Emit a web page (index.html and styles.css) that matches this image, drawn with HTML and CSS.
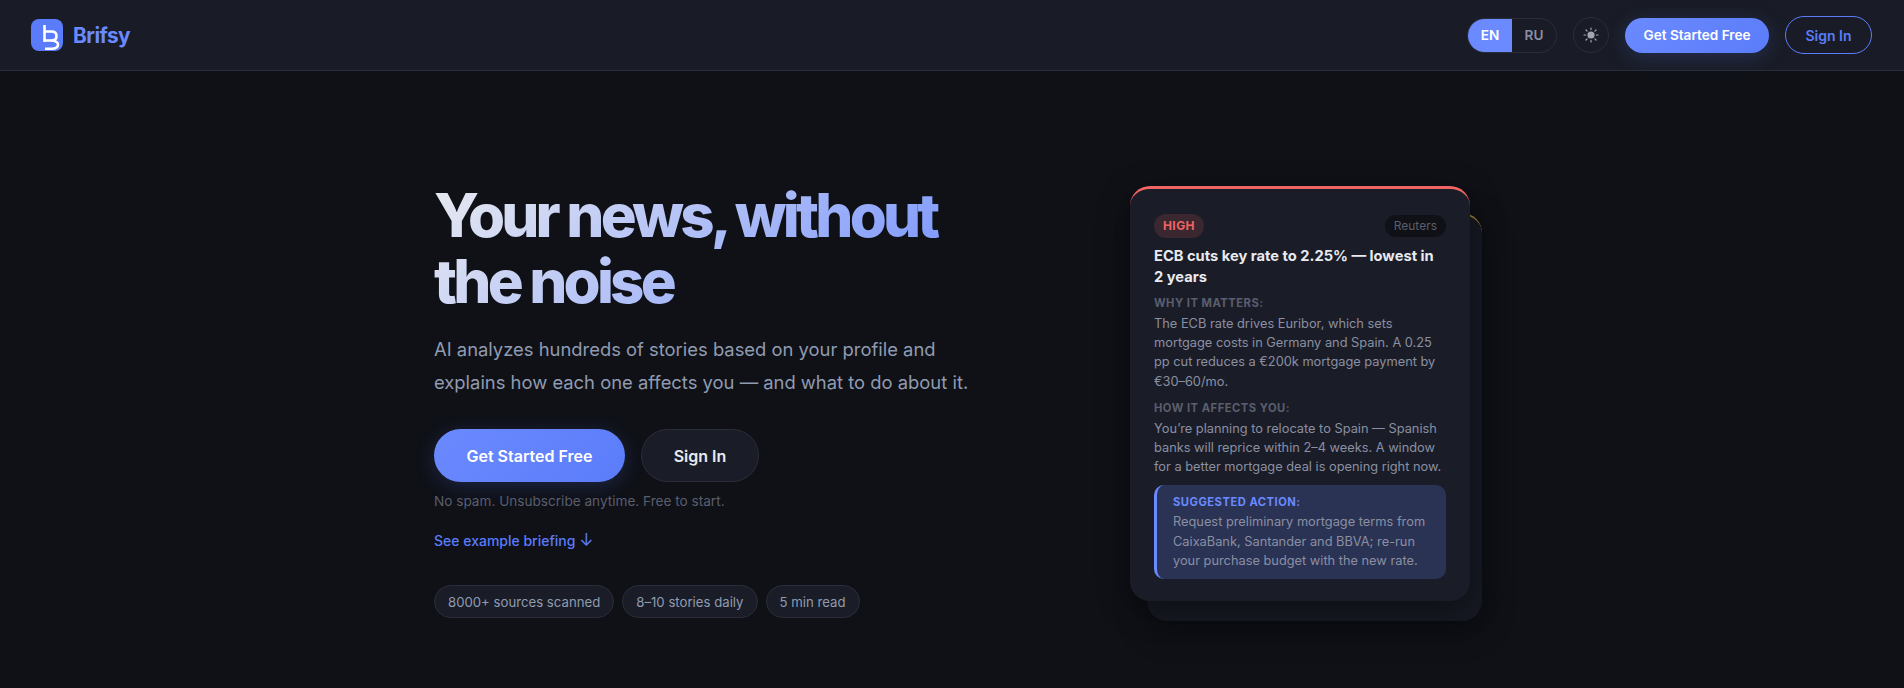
FILE: index.html
```html
<!DOCTYPE html>
<html lang="en">
<head>
    <meta charset="UTF-8">
    <meta name="viewport" content="width=device-width, initial-scale=1.0">
    <title>Brifsy</title>
    <link rel="stylesheet" href="styles.css">
</head>
<body>
    <header class="nav">
        <a class="logo" href="#">
            <svg class="logo-icon" width="32" height="32" viewBox="0 0 32 32">
                <rect width="32" height="32" rx="8" fill="#5b7cfa"/>
                <g fill="none" stroke="#fff" stroke-width="2.600">
                    <path d="M13.500 6V23"/>
                    <path d="M13.500 12.500H20.500Q25.500 12.500 25.500 17T20.500 21.500H13.500"/>
                    <path d="M20.500 21.500Q27 22 27 25.800T20.500 29.800H14"/>
                </g>
            </svg>
            <span class="logo-text">Brifsy</span>
        </a>
        <div class="nav-right">
            <div class="lang">
                <button class="lang-btn active">EN</button>
                <button class="lang-btn">RU</button>
            </div>
            <button class="theme-btn" aria-label="Theme">
                <svg width="16" height="16" viewBox="0 0 16 16" fill="#a3a7b3" stroke="#a3a7b3" stroke-width="1.200" stroke-linecap="round">
                    <circle cx="8" cy="8" r="3.600" stroke="none"/>
                    <path d="M8 1v1.600M8 13.400V15M1 8h1.600M13.400 8H15M3 3l1.100 1.100M11.900 11.900L13 13M3 13l1.100-1.100M11.900 4.100L13 3"/>
                </svg>
            </button>
            <button class="btn-primary nav-start">Get Started Free</button>
            <button class="nav-signin">Sign In</button>
        </div>
    </header>

    <main class="hero">
        <section class="hero-left">
            <h1>Your news, without the noise</h1>
            <p class="lead">AI analyzes hundreds of stories based on your profile and explains how each one affects you — and what to do about it.</p>
            <div class="cta">
                <button class="btn-primary big-start">Get Started Free</button>
                <button class="big-signin">Sign In</button>
            </div>
            <p class="note">No spam. Unsubscribe anytime. Free to start.</p>
            <a class="example-link" href="#">See example briefing <span class="arrow">↓</span></a>
            <div class="chips">
                <span class="chip">8000+ sources scanned</span>
                <span class="chip">8–10 stories daily</span>
                <span class="chip">5 min read</span>
            </div>
        </section>

        <section class="card-stack">
            <div class="card-back"></div>
            <article class="card">
                <div class="card-top">
                    <span class="badge">HIGH</span>
                    <span class="source">Reuters</span>
                </div>
                <h3>ECB cuts key rate to 2.25% — lowest in 2 years</h3>
                <div class="label">WHY IT MATTERS:</div>
                <p class="body-text">The ECB rate drives Euribor, which sets mortgage costs in Germany and Spain. A 0.25 pp cut reduces a €200k mortgage payment by €30–60/mo.</p>
                <div class="label">HOW IT AFFECTS YOU:</div>
                <p class="body-text">You’re planning to relocate to Spain — Spanish banks will reprice within 2–4 weeks. A window for a better mortgage deal is opening right now.</p>
                <div class="action">
                    <div class="action-label">SUGGESTED ACTION:</div>
                    <p class="body-text">Request preliminary mortgage terms from CaixaBank, Santander and BBVA; re-run your purchase budget with the new rate.</p>
                </div>
            </article>
        </section>
    </main>
</body>
</html>
```

FILE: styles.css
```css
* {
    box-sizing: border-box;
}
body {
    font-family: Inter, "Liberation Sans", sans-serif;
    margin: 0;
    background-color: #0f1117;
    color: #e8eaf0;
}
button {
    font-family: inherit;
    cursor: pointer;
}
.nav {
    height: 71px;
    display: flex;
    justify-content: space-between;
    align-items: center;
    padding: 0 32px 0 31px;
    background-color: #191c26;
    border-bottom: 1px solid #2a2e3a;
}
.logo {
    display: flex;
    align-items: center;
    gap: 10px;
    text-decoration: none;
}
.logo-text {
    font-size: 20.800px;
    font-weight: 700;
    letter-spacing: -0.5px;
    color: #6b8aff;
}
.nav-right {
    display: flex;
    align-items: center;
    gap: 16px;
}
.lang {
    display: flex;
    height: 35px;
    border: 1px solid #2a2e3a;
    border-radius: 18px;
    overflow: hidden;
}
.lang-btn {
    width: 44px;
    border: none;
    background: transparent;
    color: #8b8fa3;
    font-size: 13.600px;
    font-weight: 600;
}
.lang-btn.active {
    background-color: #6b8aff;
    color: #fff;
}
.theme-btn {
    width: 36px;
    height: 36px;
    padding: 0;
    display: flex;
    align-items: center;
    justify-content: center;
    border: 1px solid #2a2e3a;
    border-radius: 50%;
    background: transparent;
}
.btn-primary {
    border: none;
    color: #fff;
    font-weight: 600;
    background: linear-gradient(135deg, #6b8aff, #5b7cfa);
    box-shadow: 0 4px 20px rgba(91,124,250,0.2);
}
.nav-start {
    height: 35px;
    width: 144px;
    border-radius: 18px;
    font-size: 13.600px;
}
.nav-signin {
    height: 38px;
    width: 87px;
    border: 1.500px solid #5b7cfa;
    border-radius: 19px;
    background: transparent;
    color: #5b7cfa;
    font-size: 14px;
    font-weight: 600;
}
.hero {
    width: 1036px;
    min-height: 617px;
    margin: 0 auto;
    padding-top: 115px;
    display: flex;
    justify-content: space-between;
    align-items: flex-start;
}
.hero-left {
    width: 560px;
    margin-top: -4px;
}
h1 {
    margin: 0 0 19px;
    font-size: 60px;
    font-weight: 800;
    line-height: 66px;
    letter-spacing: -3.800px;
    background: linear-gradient(135deg, #e8eaf0 0%, #6b8aff 100%);
    -webkit-background-clip: text;
    background-clip: text;
    color: transparent;
}
.lead {
    margin: 0 0 30px;
    font-size: 18.400px;
    line-height: 33px;
    color: #8f9bb0;
}
.cta {
    display: flex;
    gap: 16px;
}
.big-start {
    width: 191px;
    height: 53px;
    border-radius: 27px;
    font-size: 16px;
}
.big-signin {
    width: 118px;
    height: 53px;
    border: 1px solid #2a2e3a;
    border-radius: 27px;
    background-color: #1a1d27;
    color: #e8eaf0;
    font-size: 16px;
    font-weight: 600;
}
.note {
    margin: 9px 0 0;
    font-size: 13.600px;
    line-height: 20px;
    color: #5a5e6e;
}
.example-link {
    display: block;
    margin-top: 20px;
    font-size: 14px;
    line-height: 20px;
    font-weight: 500;
    color: #5b7cfa;
    text-decoration: none;
}
.arrow {
    font-size: 17px;
    line-height: 16px;
    font-weight: 400;
}
.chips {
    display: flex;
    gap: 8px;
    margin-top: 34px;
}
.chip {
    height: 33px;
    padding: 0 13px;
    display: flex;
    align-items: center;
    font-size: 13.200px;
    color: #8f9bb0;
    background-color: #1a1d27;
    border: 1px solid #2a2e3a;
    border-radius: 17px;
}
.card-stack {
    position: relative;
    width: 340px;
}
.card-back {
    position: absolute;
    top: 27px;
    left: 17px;
    right: -12px;
    height: 408px;
    border-top: 2px solid #a07d35;
    border-radius: 20px;
    background-color: #161922;
    box-shadow: 0 8px 32px rgba(0,0,0,0.4);
}
.card {
    position: relative;
    height: 415px;
    padding: 25px 24px 0;
    background-color: #1a1d27;
    border-top: 3px solid #f06464;
    border-radius: 20px;
    box-shadow: 0 8px 32px rgba(0,0,0,0.4);
}
.card-top {
    display: flex;
    justify-content: space-between;
    align-items: center;
    margin-bottom: 8px;
}
.badge {
    padding: 4px 9px;
    border-radius: 12px;
    font-size: 12px;
    line-height: 16px;
    font-weight: 700;
    letter-spacing: 0.4px;
    color: #f06464;
    background-color: rgba(240,100,100,0.15);
}
.source {
    padding: 3px 9px;
    border-radius: 11px;
    font-size: 12px;
    line-height: 16px;
    color: #5a5e6e;
    background-color: #0f1117;
}
h3 {
    margin: 0 0 7px;
    font-size: 14.700px;
    line-height: 21px;
    font-weight: 700;
    color: #e8eaf0;
}
.label {
    margin-bottom: 3px;
    font-size: 11.200px;
    line-height: 16px;
    font-weight: 700;
    letter-spacing: 0.5px;
    color: #5a5e6e;
}
.body-text {
    margin: 0;
    font-size: 12.800px;
    line-height: 19.200px;
    color: #8b8fa3;
}
.card > .body-text {
    margin-bottom: 9px;
}
.action {
    padding: 9px 16px;
    background-color: #2a3354;
    border-left: 3px solid #6b8aff;
    border-radius: 10px;
}
.action-label {
    margin-bottom: 2px;
    font-size: 11.200px;
    line-height: 16px;
    font-weight: 700;
    letter-spacing: 0.5px;
    color: #6b8aff;
}
```
